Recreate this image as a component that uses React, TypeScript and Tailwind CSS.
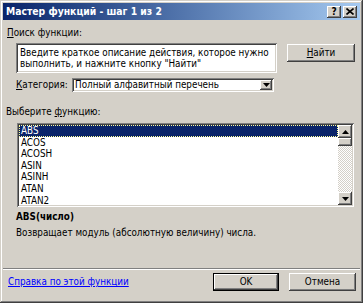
import React from "react";

const raised =
  "shadow-[inset_-1px_-1px_#404040,inset_1px_1px_#ffffff,inset_-2px_-2px_#808080,inset_2px_2px_#d4d0c8]";
const sunken =
  "shadow-[inset_1px_1px_#808080,inset_-1px_-1px_#ffffff,inset_2px_2px_#404040,inset_-2px_-2px_#d4d0c8]";

function Btn({ children, className = "" }: { children?: React.ReactNode; className?: string }) {
  return (
    <div className={`bg-[#d4d0c8] ${raised} flex items-center justify-center text-black ${className}`}>
      {children}
    </div>
  );
}

function Tri({ up }: { up?: boolean }) {
  return (
    <svg width="7" height="4" viewBox="0 0 7 4">
      {up ? <polygon points="3.5,0 7,4 0,4" fill="#000" /> : <polygon points="0,0 7,0 3.5,4" fill="#000" />}
    </svg>
  );
}

export default function App() {
  const items = ["ABS", "ACOS", "ACOSH", "ASIN", "ASINH", "ATAN", "ATAN2"];
  return (
    <div
      className={`w-[363px] h-[303px] bg-[#d4d0c8] p-[3px] flex flex-col text-[9.8px] leading-[12px] whitespace-nowrap text-black font-['DejaVu_Sans_Condensed','DejaVu_Sans',sans-serif] shadow-[inset_-1px_-1px_#404040,inset_1px_1px_#d4d0c8,inset_-2px_-2px_#808080,inset_2px_2px_#ffffff]`}
    >
      {/* Title bar */}
      <div className="h-[17px] bg-gradient-to-r from-[#0a246a] to-[#a6caf0] flex items-center pl-[3px] pr-[3px]">
        <span className="text-white font-bold text-[10.3px] leading-[13px]">Мастер функций - шаг 1 из 2</span>
        <div className="ml-auto flex gap-[2px]">
          <Btn className="w-[14px] h-[12px] text-[10px] font-bold leading-[10px]">?</Btn>
          <Btn className="w-[14px] h-[12px]">
            <svg width="8" height="7" viewBox="0 0 8 7">
              <path d="M0.5 0.5 L7.5 6.5 M7.5 0.5 L0.5 6.5" stroke="#000" strokeWidth="1.6" />
            </svg>
          </Btn>
        </div>
      </div>

      {/* Search label */}
      <div className="mt-[7px] ml-[4px] h-[12px]">
        <span className="underline">П</span>оиск функции:
      </div>

      {/* Search row */}
      <div className="mt-[4px] flex items-start">
        <div className={`ml-[13px] w-[261px] h-[30px] bg-white ${sunken} pl-[4px] pt-[4px] leading-[11px]`}>
          <div>Введите краткое описание действия, которое нужно</div>
          <div>выполнить, и нажните кнопку "Найти"</div>
        </div>
        <Btn className="ml-[10px] mt-[1px] w-[68px] h-[18px]">
          <span>
            <span className="underline">Н</span>айти
          </span>
        </Btn>
      </div>

      {/* Category row */}
      <div className="mt-[5px] flex items-center h-[14px]">
        <div className="ml-[13px] w-[56px]">
          <span className="underline">К</span>атегория:
        </div>
        <div className={`w-[202px] h-[14px] bg-white ${sunken} flex items-center p-[2px]`}>
          <span className="pl-[1px] flex-1 leading-[10px]">Полный алфавитный перечень</span>
          <Btn className="w-[12px] h-[10px]">
            <Tri />
          </Btn>
        </div>
      </div>

      {/* Function label */}
      <div className="mt-[14px] ml-[3px] h-[12px]">
        Выберите <span className="underline">ф</span>ункцию:
      </div>

      {/* Listbox */}
      <div className={`mt-[5px] ml-[14px] w-[337px] h-[84px] bg-white ${sunken} p-[2px] flex`}>
        <div className="flex-1 overflow-hidden">
          {items.map((it, i) => (
            <div
              key={it}
              className={`h-[11.6px] leading-[11.6px] pl-[2px] ${
                i === 0 ? "bg-[#0a246a] text-white outline outline-1 outline-dotted outline-[#ffff99] -outline-offset-1" : ""
              }`}
            >
              {it}
            </div>
          ))}
        </div>
        <div className="w-[14px] flex flex-col bg-[repeating-conic-gradient(#d4d0c8_0_25%,#ffffff_0_50%)] bg-[length:2px_2px]">
          <Btn className="w-[14px] h-[13px] shrink-0">
            <Tri up />
          </Btn>
          <div className={`w-[14px] h-[8px] bg-[#d4d0c8] ${raised}`} />
          <div className="flex-1" />
          <Btn className="w-[14px] h-[13px] shrink-0">
            <Tri />
          </Btn>
        </div>
      </div>

      {/* Description */}
      <div className="mt-[4px] ml-[13px] h-[12px] font-bold">ABS(число)</div>
      <div className="mt-[4px] ml-[13px] h-[12px]">Возвращает модуль (абсолютную величину) числа.</div>

      <div className="flex-1" />
      {/* Separator */}
      <div className="h-[2px] border-t border-t-[#808080] border-b border-b-white" />

      {/* Bottom row */}
      <div className="mt-[3px] mb-[9px] flex items-center">
        <span className="ml-[5px] text-[#0000ff] underline">Справка по этой функции</span>
        <div className="ml-auto flex gap-[10px] mr-[4px]">
          <div className="border border-black">
            <Btn className="w-[64px] h-[16px]">OK</Btn>
          </div>
          <Btn className="w-[67px] h-[18px]">Отмена</Btn>
        </div>
      </div>
    </div>
  );
}
